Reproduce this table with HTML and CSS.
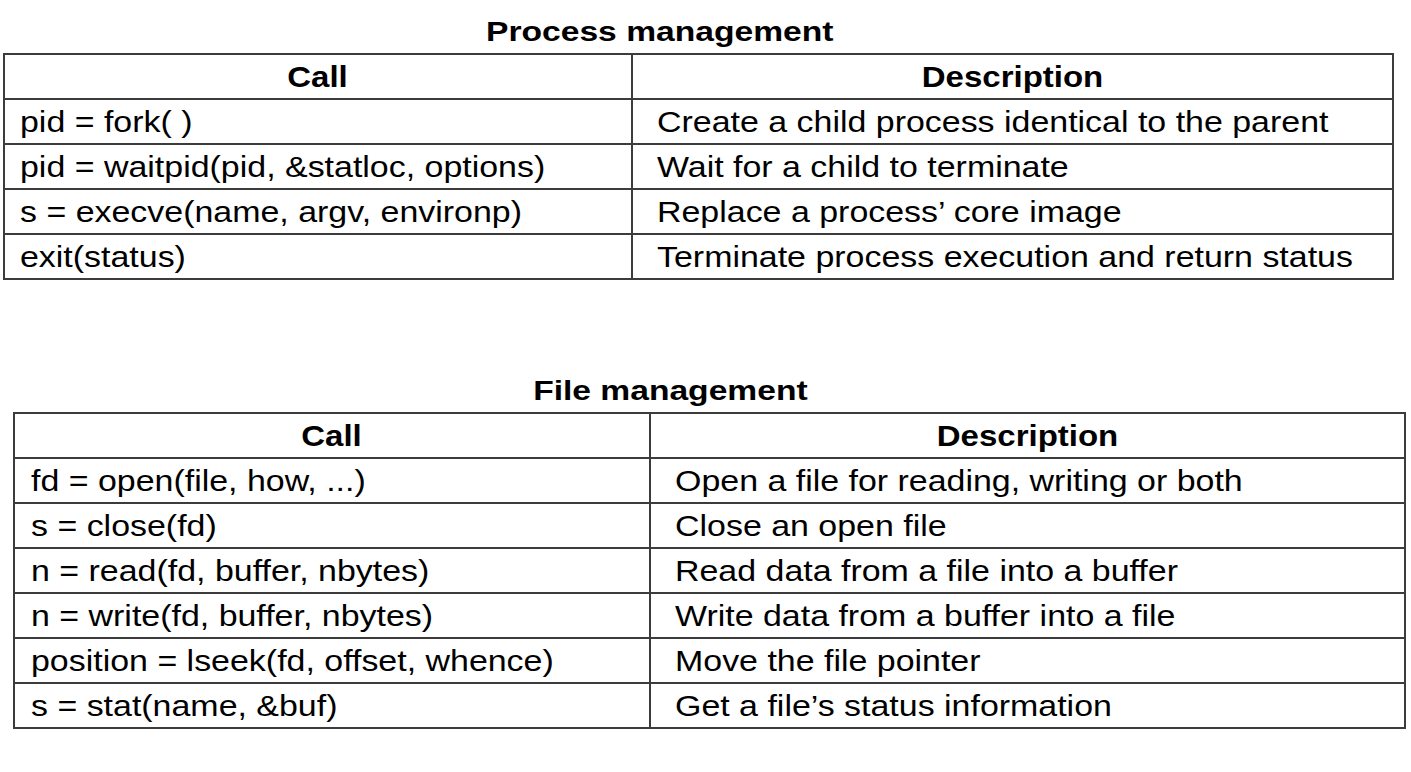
FILE: index.html
```html
<!DOCTYPE html>
<html>
<head>
<meta charset="utf-8">
<link rel="stylesheet" href="styles.css">
</head>
<body>
<section class="block block-process">
  <h2 class="title"><span class="tt">Process management</span></h2>
  <table class="calls">
    <colgroup><col class="c1"><col class="c2"></colgroup>
    <thead>
      <tr><th><span class="ht">Call</span></th><th><span class="ht">Description</span></th></tr>
    </thead>
    <tbody>
      <tr><td><span class="bt">pid = fork( )</span></td><td class="desc"><span class="bt">Create a child process identical to the parent</span></td></tr>
      <tr><td><span class="bt">pid = waitpid(pid, &amp;statloc, options)</span></td><td class="desc"><span class="bt">Wait for a child to terminate</span></td></tr>
      <tr><td><span class="bt">s = execve(name, argv, environp)</span></td><td class="desc"><span class="bt">Replace a process’ core image</span></td></tr>
      <tr><td><span class="bt">exit(status)</span></td><td class="desc"><span class="bt">Terminate process execution and return status</span></td></tr>
    </tbody>
  </table>
</section>
<section class="block block-file">
  <h2 class="title"><span class="tt">File management</span></h2>
  <table class="calls">
    <colgroup><col class="c1"><col class="c2"></colgroup>
    <thead>
      <tr><th><span class="ht">Call</span></th><th><span class="ht">Description</span></th></tr>
    </thead>
    <tbody>
      <tr><td><span class="bt">fd = open(file, how, ...)</span></td><td class="desc"><span class="bt">Open a file for reading, writing or both</span></td></tr>
      <tr><td><span class="bt">s = close(fd)</span></td><td class="desc"><span class="bt">Close an open file</span></td></tr>
      <tr><td><span class="bt">n = read(fd, buffer, nbytes)</span></td><td class="desc"><span class="bt">Read data from a file into a buffer</span></td></tr>
      <tr><td><span class="bt">n = write(fd, buffer, nbytes)</span></td><td class="desc"><span class="bt">Write data from a buffer into a file</span></td></tr>
      <tr><td><span class="bt">position = lseek(fd, offset, whence)</span></td><td class="desc"><span class="bt">Move the file pointer</span></td></tr>
      <tr><td><span class="bt">s = stat(name, &amp;buf)</span></td><td class="desc"><span class="bt">Get a file’s status information</span></td></tr>
    </tbody>
  </table>
</section>
</body>
</html>
```
FILE: styles.css
```css
html, body {
  margin: 0;
  padding: 0;
  background: #ffffff;
  color: #000000;
  font-family: "Liberation Sans", Arial, Helvetica, sans-serif;
}

.block {
  display: flex;
  flex-direction: column;
}

.block-process {
  padding-left: 3px;
}

.block-file {
  padding-left: 13px;
  margin-top: 95px;
}

.title {
  width: 1314px;
  margin: 0;
  padding-top: 16px;
  height: 32px;
  line-height: 32px;
  font-size: 28px;
  font-weight: bold;
  text-align: center;
  white-space: nowrap;
  margin-bottom: 5px;
}

.block-file .title {
  padding-top: 0;
}

.tt {
  display: inline-block;
  transform: scaleX(1.2);
  transform-origin: center center;
}

.calls {
  border-collapse: collapse;
  table-layout: fixed;
  border: 2px solid #3c3c3c;
}

.block-process .calls {
  width: 1391px;
}

.block-file .calls {
  width: 1393px;
}

.block-process .c1 { width: 628px; }
.block-file .c1 { width: 636px; }

.calls th,
.calls td {
  border: 2px solid #3c3c3c;
  padding: 0;
  white-space: nowrap;
  overflow: visible;
  vertical-align: middle;
}

.calls th {
  height: 43px;
  line-height: 43px;
  font-size: 30px;
  font-weight: bold;
  text-align: center;
}

.calls td {
  font-size: 29px;
  font-weight: normal;
  text-align: left;
  padding-left: 15px;
  padding-top: 2px;
  height: 41px;
  line-height: 41px;
}

.block-file .calls td {
  padding-left: 16px;
}

.calls td.desc {
  padding-left: 24px;
}

.ht {
  display: inline-block;
  transform: scaleX(1.1);
  transform-origin: center center;
}

.bt {
  display: inline-block;
  transform: scaleX(1.17);
  transform-origin: left center;
}
```
